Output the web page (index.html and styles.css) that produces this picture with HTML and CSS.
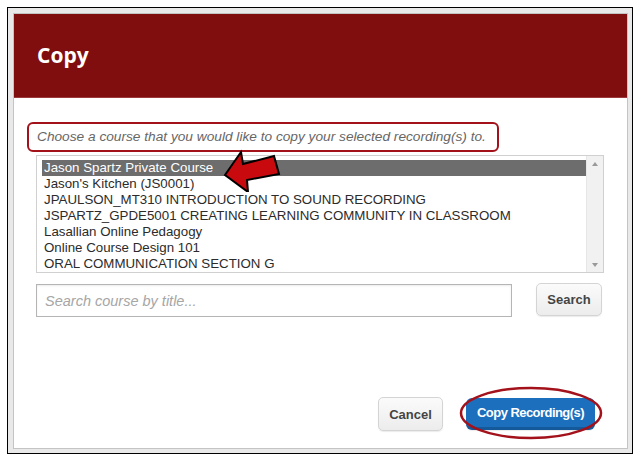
FILE: index.html
```html
<!DOCTYPE html>
<html lang="en">
<head>
  <meta charset="UTF-8">
  <title>Copy</title>
  <link rel="stylesheet" href="styles.css">
</head>
<body>
  <div class="frame">
    <div class="dialog">
      <div class="dialog-header">
        <h1>Copy</h1>
      </div>

      <div class="dialog-body">
        <div class="hint">Choose a course that you would like to copy your selected recording(s) to.</div>

        <div class="listbox">
          <ul class="courses">
            <li class="selected">Jason Spartz Private Course</li>
            <li>Jason's Kitchen (JS0001)</li>
            <li>JPAULSON_MT310 INTRODUCTION TO SOUND RECORDING</li>
            <li>JSPARTZ_GPDE5001 CREATING LEARNING COMMUNITY IN CLASSROOM</li>
            <li>Lasallian Online Pedagogy</li>
            <li>Online Course Design 101</li>
            <li>ORAL COMMUNICATION SECTION G</li>
          </ul>
          <div class="scrollbar">
            <span class="arrow-up"></span>
            <span class="arrow-down"></span>
          </div>
        </div>

        <!-- annotation arrow -->
        <svg class="pointer" width="64" height="50" viewBox="0 0 64 50">
          <path d="M3 33 L19 10 L21 22 L52 14 L57 32 L25 38 L26 50 Z" fill="#c8090d" stroke="#000" stroke-width="2" stroke-linejoin="miter"/>
        </svg>

        <div class="search-row">
          <input class="search-input" type="text" placeholder="Search course by title...">
          <button class="btn btn-search">Search</button>
        </div>
      </div>

      <div class="dialog-footer">
        <button class="btn btn-cancel">Cancel</button>
        <div class="copy-wrap">
          <button class="btn btn-primary">Copy Recording(s)</button>
          <svg class="ring" width="144" height="54" viewBox="0 0 144 54">
            <ellipse cx="72" cy="27" rx="70" ry="25" fill="none" stroke="#a3111b" stroke-width="2.5"/>
          </svg>
        </div>
      </div>
    </div>
  </div>
</body>
</html>
```

FILE: styles.css
```css
body {
  margin: 0;
  background: #fff;
  font-family: "Liberation Sans", Arial, sans-serif;
  color: #333;
}

.frame {
  margin: 7px 0 0 7px;
  width: 615px;
  height: 436px;
  padding: 5px 4px 4px 5px;
  border: 1px solid #000;
  background: #e9e9e9;
  display: flex;
}

.dialog {
  flex: 1;
  display: flex;
  flex-direction: column;
  background: #fff;
  border: 1px solid #c4c4c4;
  position: relative;
}

.dialog-header {
  height: 83px;
  background: #800e0e;
  border-bottom: 1px solid #9b3a3a;
  display: flex;
  align-items: center;
  padding-left: 23px;
}
.dialog-header h1 {
  margin: 0 0 2px;
  font-family: "Open Sans", sans-serif;
  font-size: 21px;
  font-weight: bold;
  color: #fff;
}

.dialog-body {
  position: relative;
  padding: 24px 23px 0 22px;
  display: flex;
  flex-direction: column;
}

.hint {
  align-self: flex-start;
  margin-left: -9px;
  width: 460px;
  height: 26px;
  padding-left: 8px;
  border: 2px solid #a3111b;
  border-radius: 6px;
  font-size: 13.7px;
  font-style: italic;
  color: #666;
  line-height: 26px;
  white-space: nowrap;
}

.listbox {
  margin-top: 3px;
  height: 116px;
  border: 1px solid #d0d0d0;
  display: flex;
  overflow: hidden;
}

.courses {
  flex: 1;
  list-style: none;
  margin: 0;
  padding: 4px 0 0 5px;
}
.courses li {
  height: 16px;
  line-height: 16px;
  padding-left: 2px;
  font-size: 13.3px;
  color: #2b2b2b;
  white-space: nowrap;
}
.courses li.selected {
  background: #6d6d6d;
  color: #fff;
}

.scrollbar {
  width: 16px;
  background: #f1f1f1;
  border-left: 1px solid #e6e6e6;
  display: flex;
  flex-direction: column;
  justify-content: space-between;
  align-items: center;
  padding: 6px 0 5px;
}
.arrow-up,
.arrow-down {
  width: 0;
  height: 0;
  border-left: 3px solid transparent;
  border-right: 3px solid transparent;
}
.arrow-up {
  border-bottom: 4px solid #999;
}
.arrow-down {
  border-top: 4px solid #999;
}

.pointer {
  position: absolute;
  left: 208px;
  top: 44px;
}

.search-row {
  margin-top: 10px;
  display: flex;
  align-items: flex-start;
  gap: 24px;
}

.search-input {
  flex: none;
  width: 476px;
  height: 33px;
  box-sizing: border-box;
  margin-top: 1px;
  padding: 0 8px;
  border: 1px solid #b5b5b5;
  box-shadow: inset 0 1px 2px rgba(0, 0, 0, 0.08);
  font-family: "Liberation Sans", Arial, sans-serif;
  font-size: 14.5px;
  color: #333;
}
.search-input::placeholder {
  color: #a6a6a6;
  font-style: italic;
}

.btn {
  height: 33px;
  padding: 0;
  border: 1px solid #d4d4d4;
  border-radius: 5px;
  background: linear-gradient(#fbfbfb, #ececec);
  box-shadow: 0 1px 1px rgba(0, 0, 0, 0.08);
  font-family: "Liberation Sans", Arial, sans-serif;
  font-size: 13px;
  font-weight: bold;
  color: #444;
  white-space: nowrap;
  cursor: pointer;
}

.btn-search {
  width: 66px;
}

.dialog-footer {
  margin-top: auto;
  padding: 0 32px 17px 0;
  display: flex;
  justify-content: flex-end;
  align-items: flex-start;
  gap: 23px;
}

.btn-cancel {
  width: 65px;
  height: 34px;
}

.copy-wrap {
  position: relative;
}

.btn-primary {
  display: block;
  margin-top: 1px;
  width: 129px;
  height: 32px;
  border: none;
  border-bottom: 3px solid #14599a;
  border-radius: 6px;
  background: #1b6fbd;
  color: #fff;
  letter-spacing: -0.55px;
}

.ring {
  position: absolute;
  left: -7px;
  top: -11px;
}
```
